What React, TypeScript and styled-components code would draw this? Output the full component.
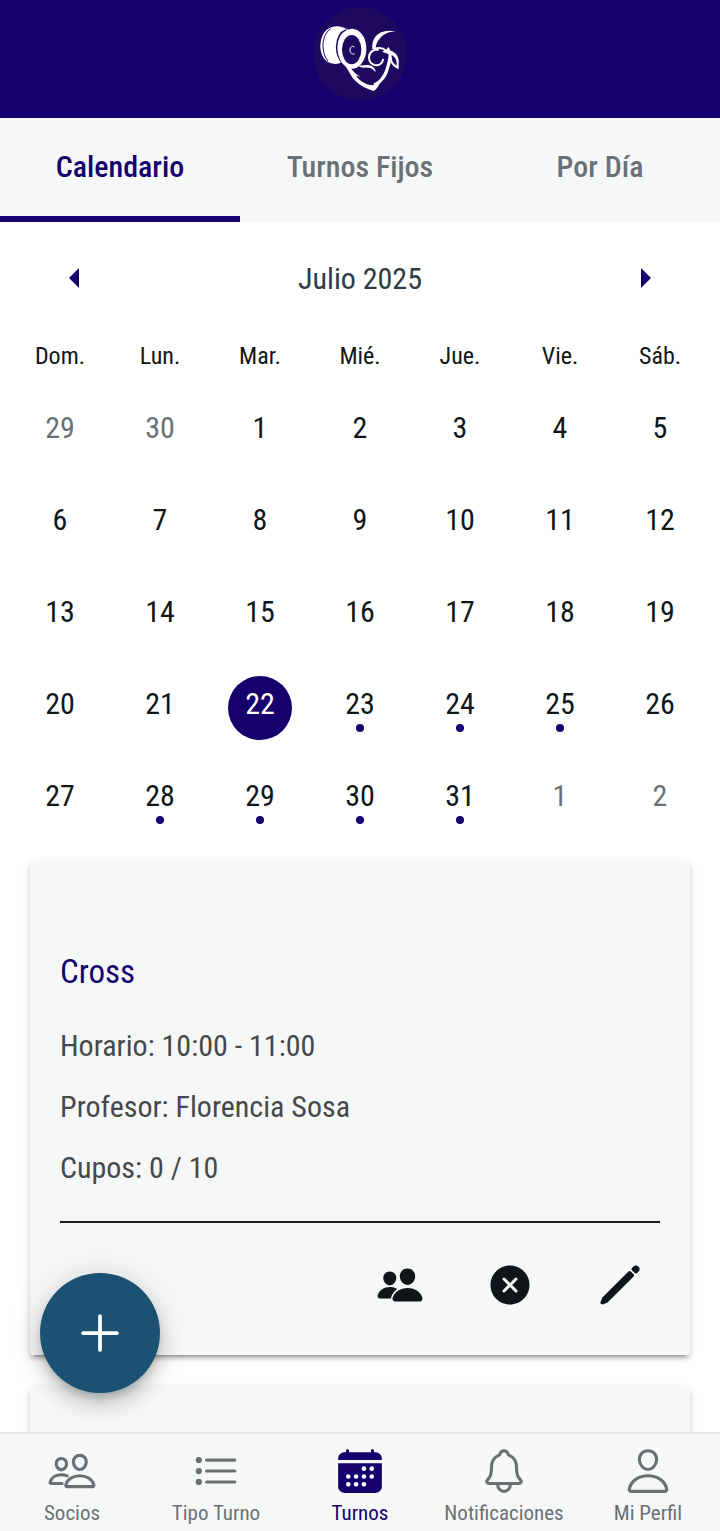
import React from "react";
import styled, { createGlobalStyle } from "styled-components";
import {
  IoAdd,
  IoCalendar,
  IoCloseCircle,
  IoListOutline,
  IoNotificationsOutline,
  IoPencil,
  IoPeople,
  IoPeopleOutline,
  IoPersonOutline,
} from "react-icons/io5";

const navy = "#15006e";
const surface = "#f6f8f8";
const muted = "#6b7074";
const ink = "#101518";

const GlobalStyle = createGlobalStyle`
  *, *::before, *::after { box-sizing: border-box; }
  body { margin: 0; background: #fff; }
  body, button { font-family: "Roboto Condensed", Roboto, sans-serif; }
  button { margin: 0; padding: 0; border: 0; background: none; cursor: pointer; }
  svg { display: block; }
`;

const Shell = styled.div`
  position: relative;
  display: flex;
  flex-direction: column;
  height: 100vh;
  overflow: hidden;
  color: ${ink};
`;

const Header = styled.header`
  display: flex;
  justify-content: center;
  flex: none;
  height: 118px;
  background: ${navy};
`;

const Segments = styled.div`
  display: grid;
  grid-template-columns: repeat(3, 1fr);
  flex: none;
  height: 104px;
  background: ${surface};
`;

const Segment = styled.button<{ $active?: boolean }>`
  padding-bottom: 2px;
  border-bottom: 6px solid ${(p) => (p.$active ? navy : "transparent")};
  color: ${(p) => (p.$active ? navy : muted)};
  font-size: 30px;
  font-weight: 500;
`;

const Content = styled.main`
  flex: 1;
  min-height: 0;
  overflow-y: auto;
  scrollbar-width: none;
`;

const MonthBar = styled.div`
  display: flex;
  align-items: center;
  justify-content: space-between;
  height: 112px;
  padding: 0 44px;
`;

const MonthTitle = styled.h2`
  margin: 0;
  color: #2d3b45;
  font-size: 30px;
  font-weight: 400;
`;

const ArrowButton = styled.button`
  display: grid;
  place-items: center;
  width: 60px;
  height: 60px;
  color: ${navy};
`;

const CalendarWrap = styled.div`
  padding: 0 10px;
`;

const MonthTable = styled.table`
  width: 100%;
  table-layout: fixed;
  border-collapse: collapse;
`;

const Weekday = styled.th`
  height: 52px;
  padding: 0 0 8px;
  font-size: 24px;
  font-weight: 400;
`;

const DayCell = styled.td`
  height: 92px;
  padding: 0;
`;

const DayButton = styled.button<{ $selected: boolean; $outside: boolean }>`
  display: flex;
  flex-direction: column;
  align-items: center;
  gap: 2px;
  width: 64px;
  height: 64px;
  margin: 0 auto;
  padding-top: 10px;
  border-radius: 50%;
  background: ${(p) => (p.$selected ? navy : "transparent")};
  color: ${(p) => (p.$selected ? "#fff" : p.$outside ? muted : ink)};
  font-size: 30px;
  line-height: 36px;
`;

const Dot = styled.span`
  width: 8px;
  height: 8px;
  border-radius: 50%;
  background: ${navy};
`;

const CardList = styled.div`
  display: grid;
  gap: 32px;
  padding: 16px 30px 32px;
`;

const Card = styled.article`
  min-height: 300px;
  padding: 86px 30px 30px;
  border-radius: 4px;
  background: ${surface};
  box-shadow:
    0 6px 2px -4px rgba(0, 0, 0, 0.2),
    0 4px 4px rgba(0, 0, 0, 0.14),
    0 2px 10px rgba(0, 0, 0, 0.12);
`;

const CardTitle = styled.h3`
  margin: 0 0 20px;
  color: ${navy};
  font-size: 33px;
  font-weight: 400;
  line-height: 48px;
`;

const CardLine = styled.p`
  margin: 0;
  padding: 12px 0 13px;
  color: #46484a;
  font-size: 30px;
  line-height: 36px;
`;

const CardActions = styled.div`
  display: flex;
  justify-content: flex-end;
  gap: 30px;
  margin-top: 22px;
  padding-top: 22px;
  border-top: 2px solid #1c2022;
`;

const IconButton = styled.button`
  display: grid;
  place-items: center;
  width: 80px;
  height: 80px;
  color: ${ink};
`;

const AddButton = styled.button`
  position: absolute;
  bottom: 138px;
  left: 40px;
  display: grid;
  place-items: center;
  width: 120px;
  height: 120px;
  border-radius: 50%;
  background: #1b5273;
  color: #fff;
  box-shadow:
    0 6px 10px -2px rgba(0, 0, 0, 0.2),
    0 12px 20px rgba(0, 0, 0, 0.14),
    0 2px 36px rgba(0, 0, 0, 0.12);
`;

const TabBar = styled.nav`
  display: grid;
  grid-template-columns: repeat(5, 1fr);
  flex: none;
  height: 99px;
  border-top: 2px solid #e4e6e6;
  background: ${surface};
`;

const Tab = styled.button<{ $active?: boolean }>`
  display: flex;
  flex-direction: column;
  align-items: center;
  gap: 4px;
  padding-top: 12px;
  color: ${(p) => (p.$active ? navy : muted)};
  font-size: 21px;
  line-height: 26px;
  white-space: nowrap;
`;

function Logo() {
  return (
    <svg width="120" height="118" viewBox="0 0 360 354" role="img" aria-label="Logo">
      <circle cx="180" cy="162" r="141" fill="#1e0860" />
      <path d="M112 79C78 78 61 107 61 139c0 29 16 53 45 53 8 0 14-3 18-6l26-92c-10-9-24-14-38-15z" fill="#fff" />
      <path d="M92 86c-17 12-24 32-23 55 1 18 6 31 15 42" fill="none" stroke="#1e0860" strokeWidth="3" />
      <path d="M139 89c-18 7-28 26-29 51 0 20 6 36 17 49" fill="none" stroke="#1e0860" strokeWidth="5" />
      <ellipse cx="156" cy="146" rx="43" ry="60" fill="#fff" />
      <ellipse cx="155" cy="149" rx="29" ry="44" fill="#1e0860" />
      <path d="M164 141c-8-5-14 0-14 9s6 15 14 11" fill="none" stroke="#fff" strokeWidth="3" />
      <path d="M217 148c-4-36 20-64 70-54-32 2-54 17-61 52z" fill="#fff" />
      <path d="M236 150c-13-4-29 6-29 22 0 27 36 34 43 5" fill="none" stroke="#fff" strokeWidth="6" />
      <path d="M222 147c14-5 28-3 36 5" fill="none" stroke="#fff" strokeWidth="6" />
      <path
        fillRule="evenodd"
        d="M246 155l15-8 4-7 7 12c14 4 23 15 24 29v27c-13-5-21-13-25-24l-6-22zM275 166c-2 15 4 24 15 31 1-16-4-27-15-31z"
        fill="#fff"
      />
      <path d="M138 200c11 17 16 32 31 45 14 13 31 21 52 28 7-4 13-11 17-21 17-15 25-28 30-50l8-26-9-16c-5 34-11 59-27 77-6 7-12 10-18 12l-2 7c-22-1-43-15-52-29l14 3c-16-8-25-18-31-30z" fill="#fff" />
      <path d="M174 196c16 1 30-4 41 2 8 4 12 11 12 19-8-11-19-15-32-14-9 1-17-1-21-7z" fill="#fff" />
    </svg>
  );
}

function Arrow({ next }: { next?: boolean }) {
  return (
    <svg width="12" height="20" viewBox="0 0 12 20" aria-hidden="true">
      <path d={next ? "M1 0 11 10 1 20z" : "M11 0 1 10 11 20z"} fill="currentColor" />
    </svg>
  );
}

const weekdays = ["Dom.", "Lun.", "Mar.", "Mié.", "Jue.", "Vie.", "Sáb."];
const leadingDays = [29, 30];
const monthLength = 31;
const trailingDays = [1, 2];
const selectedDay = 22;
const busyDays = [23, 24, 25, 28, 29, 30, 31];

const days = [
  ...leadingDays.map((day) => ({ day, outside: true })),
  ...Array.from({ length: monthLength }, (_, i) => ({ day: i + 1, outside: false })),
  ...trailingDays.map((day) => ({ day, outside: true })),
];
const weeks = Array.from({ length: days.length / 7 }, (_, i) => days.slice(i * 7, i * 7 + 7));

const tabs = [
  { label: "Socios", Icon: IoPeopleOutline },
  { label: "Tipo Turno", Icon: IoListOutline },
  { label: "Turnos", Icon: IoCalendar, active: true },
  { label: "Notificaciones", Icon: IoNotificationsOutline },
  { label: "Mi Perfil", Icon: IoPersonOutline },
];

export default function App() {
  return (
    <Shell>
      <GlobalStyle />
      <Header>
        <Logo />
      </Header>
      <Segments>
        <Segment $active>Calendario</Segment>
        <Segment>Turnos Fijos</Segment>
        <Segment>Por Día</Segment>
      </Segments>
      <Content>
        <MonthBar>
          <ArrowButton aria-label="Mes anterior">
            <Arrow />
          </ArrowButton>
          <MonthTitle>Julio 2025</MonthTitle>
          <ArrowButton aria-label="Mes siguiente">
            <Arrow next />
          </ArrowButton>
        </MonthBar>
        <CalendarWrap>
          <MonthTable>
            <thead>
              <tr>
                {weekdays.map((name) => (
                  <Weekday key={name} scope="col">
                    {name}
                  </Weekday>
                ))}
              </tr>
            </thead>
            <tbody>
              {weeks.map((week, i) => (
                <tr key={i}>
                  {week.map(({ day, outside }) => (
                    <DayCell key={day}>
                      <DayButton $selected={!outside && day === selectedDay} $outside={outside}>
                        {day}
                        {!outside && busyDays.includes(day) && <Dot />}
                      </DayButton>
                    </DayCell>
                  ))}
                </tr>
              ))}
            </tbody>
          </MonthTable>
        </CalendarWrap>
        <CardList>
          <Card>
            <CardTitle>Cross</CardTitle>
            <CardLine>Horario: 10:00 - 11:00</CardLine>
            <CardLine>Profesor: Florencia Sosa</CardLine>
            <CardLine>Cupos: 0 / 10</CardLine>
            <CardActions>
              <IconButton aria-label="Ver socios">
                <IoPeople size={48} />
              </IconButton>
              <IconButton aria-label="Cancelar turno">
                <IoCloseCircle size={48} />
              </IconButton>
              <IconButton aria-label="Editar turno">
                <IoPencil size={48} />
              </IconButton>
            </CardActions>
          </Card>
          <Card />
        </CardList>
      </Content>
      <AddButton aria-label="Agregar turno">
        <IoAdd size={60} />
      </AddButton>
      <TabBar>
        {tabs.map(({ label, Icon, active }) => (
          <Tab key={label} $active={active}>
            <Icon size={50} />
            {label}
          </Tab>
        ))}
      </TabBar>
    </Shell>
  );
}
